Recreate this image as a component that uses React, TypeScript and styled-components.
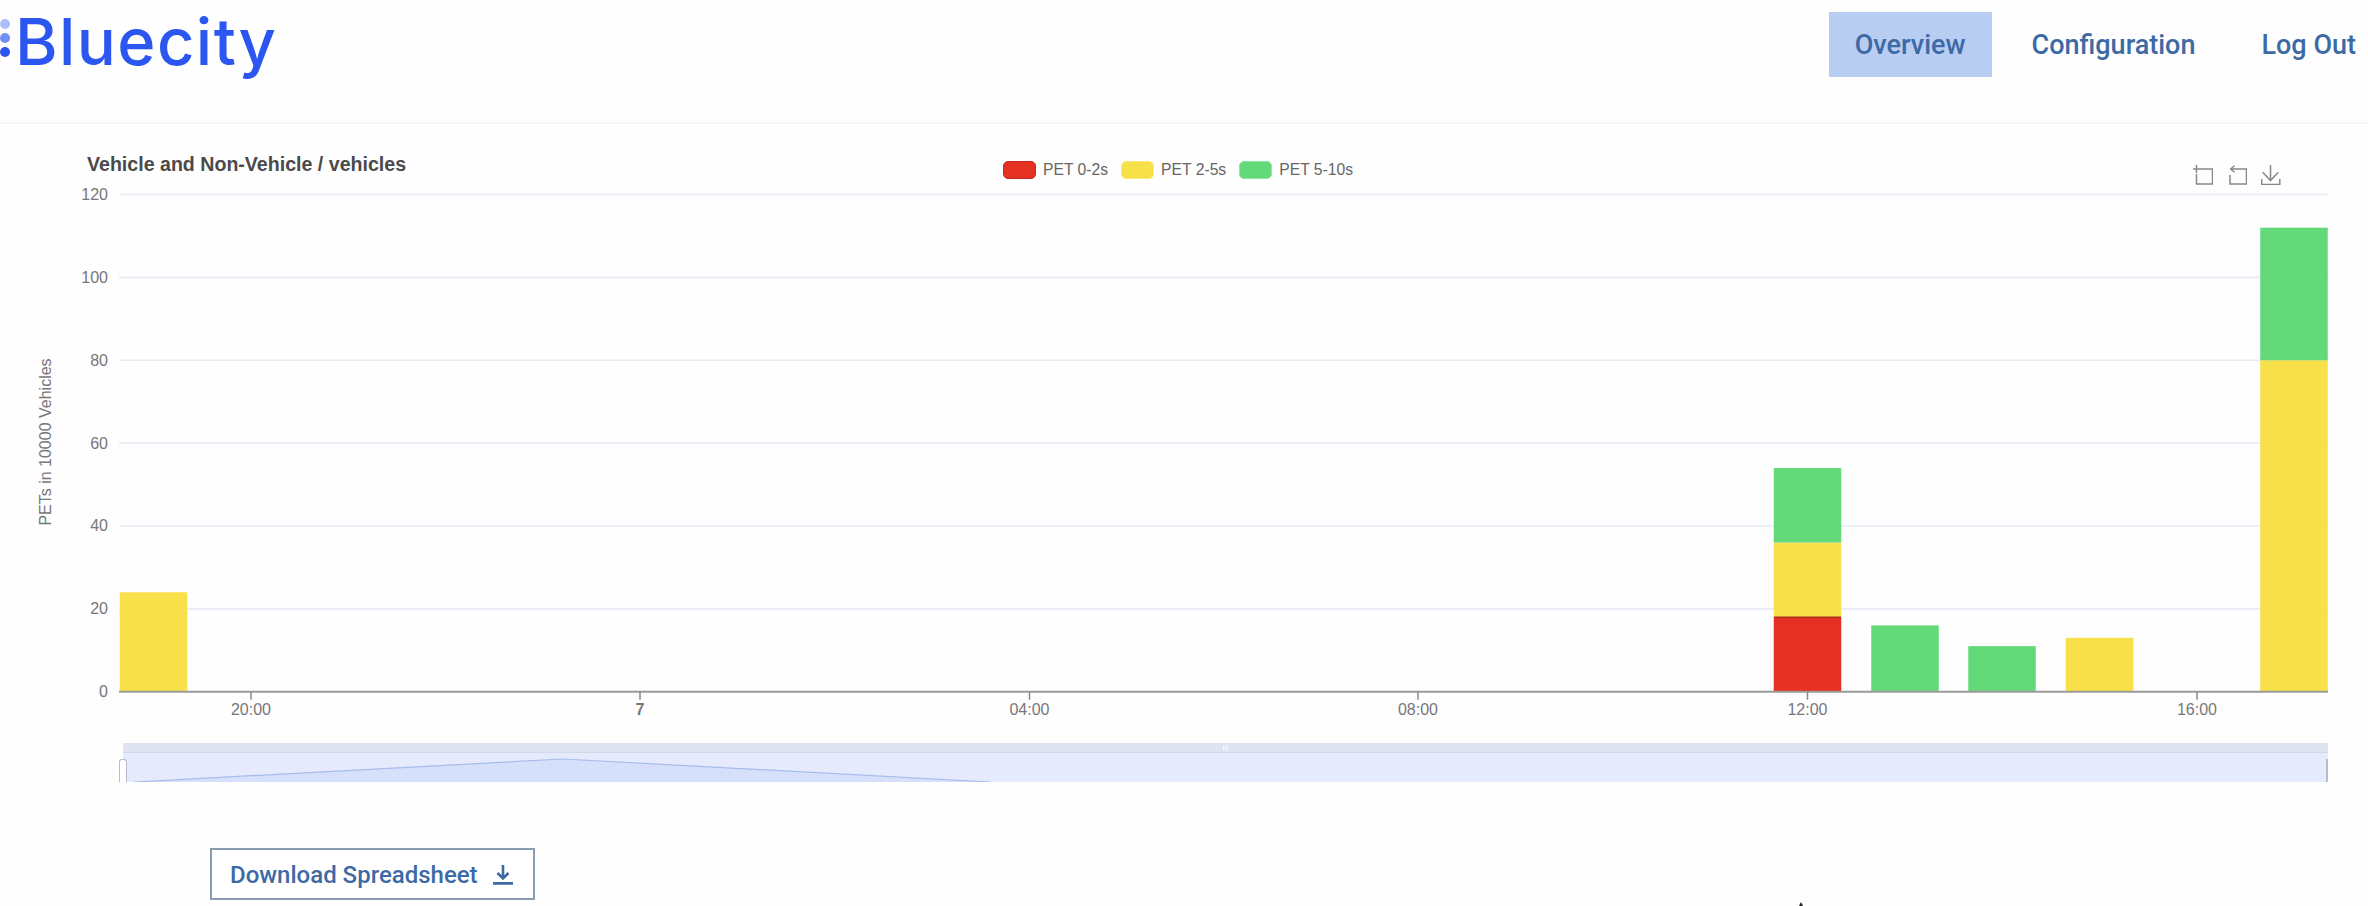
import React from 'react';
import styled, { createGlobalStyle } from 'styled-components';

const RED = '#e43121';
const YELLOW = '#f8e04a';
const GREEN = '#64d97a';

const PLOT_LEFT = 119;
const PLOT_RIGHT = 2328;
const BASE_Y = 507.7;
const UNIT = 4.143;
const BAR_WIDTH = 67.5;

const yTicks = [0, 20, 40, 60, 80, 100, 120];
const xTicks = [
  { x: 251, label: '20:00' },
  { x: 640, label: '7', bold: true },
  { x: 1029.5, label: '04:00' },
  { x: 1418, label: '08:00' },
  { x: 1807.5, label: '12:00' },
  { x: 2197, label: '16:00' },
];
const bars = [
  { x: 153.5, red: 0, yellow: 24, green: 0 },
  { x: 1807.5, red: 18, yellow: 18, green: 18 },
  { x: 1905, red: 0, yellow: 0, green: 16 },
  { x: 2002, red: 0, yellow: 0, green: 11 },
  { x: 2099.5, red: 0, yellow: 13, green: 0 },
  { x: 2294, red: 0, yellow: 80, green: 32 },
];

const GlobalStyle = createGlobalStyle`
  html, body {
    margin: 0;
    padding: 0;
    background: #fefefe;
    overflow: hidden;
  }
`;

const Page = styled.div`
  position: relative;
  width: 2368px;
  height: 906px;
  overflow: hidden;
  font-family: 'Liberation Sans', Arial, sans-serif;
`;

const Header = styled.header`
  display: flex;
  justify-content: space-between;
  height: 122px;
  border-bottom: 2px solid #f6f6f7;
`;

const Logo = styled.div`
  display: flex;
  align-items: flex-start;
  gap: 5px;
`;

const LogoDots = styled.div`
  display: flex;
  flex-direction: column;
  gap: 4px;
  padding-top: 19px;
`;

const LogoDot = styled.span<{ $color: string }>`
  width: 10px;
  height: 10px;
  border-radius: 50%;
  background: ${(p) => p.$color};
`;

const LogoText = styled.div`
  padding-top: 4px;
  font-family: Inter, sans-serif;
  font-size: 65px;
  line-height: 76px;
  font-weight: 500;
  letter-spacing: 1.4px;
  color: #2b57f0;
`;

const Nav = styled.nav`
  display: flex;
  align-items: flex-start;
  gap: 14px;
  padding: 12px 12px 0 0;
`;

const NavLink = styled.a<{ $active?: boolean }>`
  height: 65px;
  line-height: 66px;
  padding: 0 26px;
  font-family: Roboto, sans-serif;
  font-size: 27px;
  font-weight: 500;
  color: #3d6aa5;
  background: ${(p) => (p.$active ? '#b8cdf2' : 'transparent')};

  &:last-child {
    padding-right: 0;
  }
`;

const ChartHead = styled.div`
  display: grid;
  grid-template-columns: 916px auto 1fr;
  height: 60px;
  padding: 0 87px;
`;

const ChartTitle = styled.div`
  padding-top: 28px;
  font-size: 19.6px;
  line-height: 24px;
  font-weight: 700;
  color: #4a4a4a;
`;

const Legend = styled.div`
  display: flex;
  gap: 13px;
  padding-top: 37px;
`;

const LegendItem = styled.div`
  display: flex;
  gap: 7px;
  font-size: 15.7px;
  line-height: 18px;
  color: #666;
`;

const LegendSwatch = styled.span<{ $color: string; $edge: string }>`
  width: 33px;
  height: 18px;
  box-sizing: border-box;
  border-radius: 5px;
  border: 1px solid ${(p) => p.$edge};
  background: ${(p) => p.$color};
`;

const Toolbox = styled.div`
  display: flex;
  justify-content: flex-end;
  gap: 14px;
  padding-top: 41px;
`;

const ToolIcon = styled.svg`
  width: 20px;
  height: 20px;
  fill: none;
  stroke: #888;
  stroke-width: 1.5;
`;

const Plot = styled.svg`
  display: block;
  width: 2368px;
  height: 546px;
`;

const AxisText = styled.text`
  font-family: 'Liberation Sans', Arial, sans-serif;
  font-size: 16px;
  fill: #77777a;
`;

const DataZoom = styled.div`
  position: relative;
  margin: 13px 40px 0 123px;
  height: 39px;
`;

const ZoomStrip = styled.div`
  display: flex;
  justify-content: center;
  align-items: center;
  gap: 1px;
  height: 9px;
  background: #dfe4f0;
  border-bottom: 1px solid #d3d9e8;
`;

const ZoomGrip = styled.span`
  width: 1px;
  height: 5px;
  background: #f6f7fb;
`;

const ZoomTrack = styled.svg`
  display: block;
  width: 2205px;
  height: 29px;
  background: #e5ebfc;
`;

const ZoomHandle = styled.span<{ $side: 'left' | 'right' }>`
  position: absolute;
  top: 16px;
  bottom: 0;
  box-sizing: border-box;
  ${(p) =>
    p.$side === 'left'
      ? `
    left: -4px;
    width: 8px;
    background: #fff;
    border: 1px solid #b4bccb;
    border-bottom: none;
    border-radius: 3px 3px 0 0;
  `
      : `
    right: 0;
    width: 2px;
    background: #b4bccb;
  `}
`;

const DownloadButton = styled.button`
  display: flex;
  align-items: center;
  gap: 15px;
  box-sizing: border-box;
  width: 325px;
  height: 52px;
  margin: 66px 0 0 210px;
  padding: 2px 0 0 18px;
  background: #fff;
  border: 2px solid #8c9cb0;
  font-family: Roboto, sans-serif;
  font-size: 24px;
  font-weight: 500;
  color: #3d6aa5;
`;

const DownloadIcon = styled.svg`
  width: 20px;
  height: 20px;
  fill: none;
  stroke: #3d6aa5;
  stroke-width: 2.6;
`;

const CursorTip = styled.svg`
  position: absolute;
  left: 1798px;
  top: 902px;
  width: 6px;
  height: 4px;
`;

const segments = (b: (typeof bars)[number]) => {
  let total = 0;
  return [
    { value: b.red, color: RED },
    { value: b.yellow, color: YELLOW },
    { value: b.green, color: GREEN },
  ]
    .filter((s) => s.value > 0)
    .map((s) => {
      total += s.value;
      return { ...s, top: BASE_Y - total * UNIT, height: s.value * UNIT };
    });
};

const Chart = () => (
  <Plot viewBox="0 0 2368 546">
    {yTicks.map((t) => (
      <g key={t}>
        {t > 0 && <line x1={PLOT_LEFT} x2={PLOT_RIGHT} y1={BASE_Y - t * UNIT} y2={BASE_Y - t * UNIT} stroke="#e6ebf5" strokeWidth="1.6" />}
        <AxisText x={108} y={BASE_Y - t * UNIT + 5.5} textAnchor="end">
          {t}
        </AxisText>
      </g>
    ))}
    <AxisText transform="translate(51 258) rotate(-90)" textAnchor="middle">
      PETs in 10000 Vehicles
    </AxisText>
    {bars.map((b) =>
      segments(b).map((s) => (
        <rect key={`${b.x}${s.color}`} x={b.x - BAR_WIDTH / 2} y={s.top} width={BAR_WIDTH} height={s.height} fill={s.color} />
      ))
    )}
    <line x1="1774" x2="1841" y1={BASE_Y - 18 * UNIT} y2={BASE_Y - 18 * UNIT} stroke="#a8301f" strokeWidth="1.5" />
    <line x1={PLOT_LEFT} x2={PLOT_RIGHT} y1={BASE_Y} y2={BASE_Y} stroke="#9a9a9a" strokeWidth="2" />
    {xTicks.map((t) => (
      <g key={t.label}>
        <line x1={t.x} x2={t.x} y1={BASE_Y} y2={BASE_Y + 8} stroke="#8a8a8a" strokeWidth="1.5" />
        <AxisText x={t.x} y={BASE_Y + 23} textAnchor="middle" fontWeight={t.bold ? 700 : 400}>
          {t.label}
        </AxisText>
      </g>
    ))}
  </Plot>
);

export default function App() {
  return (
    <Page>
      <GlobalStyle />
      <Header>
        <Logo>
          <LogoDots>
            <LogoDot $color="#adbdfb" />
            <LogoDot $color="#6f8ff5" />
            <LogoDot $color="#2c56ee" />
          </LogoDots>
          <LogoText>Bluecity</LogoText>
        </Logo>
        <Nav>
          <NavLink $active>Overview</NavLink>
          <NavLink>Configuration</NavLink>
          <NavLink>Log Out</NavLink>
        </Nav>
      </Header>
      <ChartHead>
        <ChartTitle>Vehicle and Non-Vehicle / vehicles</ChartTitle>
        <Legend>
          <LegendItem>
            <LegendSwatch $color={RED} $edge="#c4281c" />
            PET 0-2s
          </LegendItem>
          <LegendItem>
            <LegendSwatch $color={YELLOW} $edge="#fbe97a" />
            PET 2-5s
          </LegendItem>
          <LegendItem>
            <LegendSwatch $color={GREEN} $edge="#8fe6a0" />
            PET 5-10s
          </LegendItem>
        </Legend>
        <Toolbox>
          <ToolIcon viewBox="0 0 20 20">
            <path d="M3.5 0V8M0 4H7M7 4H19.5V19H3.5V9" />
          </ToolIcon>
          <ToolIcon viewBox="0 0 20 20">
            <path d="M3 10V19H19.5V4H4M7.5 .8L3.7 4L7.5 7.2" />
          </ToolIcon>
          <ToolIcon viewBox="0 0 20 20">
            <path d="M9.5 0V15.5M1.7 7.3L9.5 15.6L17.3 7.3M.7 14V19.4H18.8V14" />
          </ToolIcon>
        </Toolbox>
      </ChartHead>
      <Chart />
      <DataZoom>
        <ZoomStrip>
          <ZoomGrip />
          <ZoomGrip />
          <ZoomGrip />
        </ZoomStrip>
        <ZoomTrack viewBox="0 0 2205 29">
          <path d="M11 29L440 6L867 29Z" fill="#d6e0fb" />
          <path d="M11 29L440 6L867 29" fill="none" stroke="#a9bbed" strokeWidth="1.2" />
        </ZoomTrack>
        <ZoomHandle $side="left" />
        <ZoomHandle $side="right" />
      </DataZoom>
      <DownloadButton>
        Download Spreadsheet
        <DownloadIcon viewBox="0 0 20 20">
          <path d="M10 0V13M4.5 8L10 13.5L15.5 8M0 18.4H20" />
        </DownloadIcon>
      </DownloadButton>
      <CursorTip viewBox="0 0 6 4">
        <path d="M3 0L5 4H1Z" fill="#222" />
      </CursorTip>
    </Page>
  );
}
